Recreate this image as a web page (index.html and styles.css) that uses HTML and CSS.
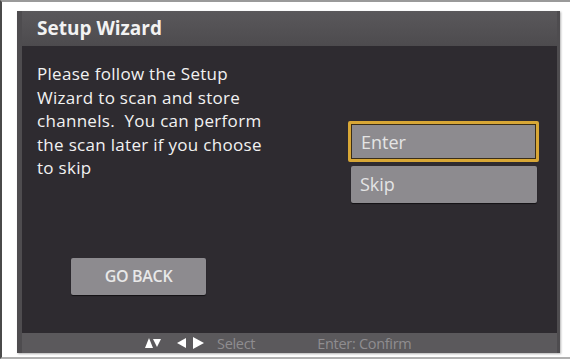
FILE: index.html
```html
<!DOCTYPE html>
<html lang="en">
<head>
    <meta charset="UTF-8">
    <meta name="viewport" content="width=device-width, initial-scale=1.0">
    <title>Setup Wizard</title>
    <link rel="stylesheet" href="styles.css">
</head>
<body>
    <div class="page">
        <div class="screen">
            <div class="title">Setup Wizard</div>
            <div class="panel">
                <p class="msg">Please follow the Setup<br>Wizard to scan and store<br>channels.&nbsp; You can perform<br>the scan later if you choose<br>to skip</p>
                <div class="options">
                    <div class="opt active">Enter</div>
                    <div class="opt">Skip</div>
                </div>
                <div class="back">GO BACK</div>
            </div>
            <div class="footer">
                <svg class="keys" width="64" height="12" viewBox="0 0 64 12">
                    <polygon points="0,11 4,1 8,11" fill="#fff"/>
                    <polygon points="8,2 16,2 12,10" fill="#fff"/>
                    <polygon points="32,6 41,1 41,11" fill="#fff"/>
                    <polygon points="48,0 59,6 48,12" fill="#fff"/>
                </svg>
                <span class="hint">Select</span>
                <span class="hint confirm">Enter: Confirm</span>
            </div>
        </div>
    </div>
</body>
</html>
```

FILE: styles.css
```css
body {
    margin: 0;
    background: #fff;
    font-family: "Open Sans", "Noto Sans", sans-serif;
}
.page {
    height: 359px;
    box-sizing: border-box;
    border-left: 2px solid #4a4a4a;
    border-top: 2px solid #9a9a9a;
    border-bottom: 2px solid #b0b0b0;
    padding: 9px 10px 4px 15px;
    display: flex;
}
.screen {
    flex: 1;
    display: flex;
    flex-direction: column;
    background: #4e4c4f;
    padding: 0 3px 0 5px;
    box-shadow: 1px 1px 2px rgba(0,0,0,0.3);
}
.title {
    height: 35px;
    line-height: 34px;
    padding-left: 15px;
    color: #f2f2f2;
    font-size: 19px;
    font-weight: bold;
    letter-spacing: 0;
    background: linear-gradient(#5a585b, #4d4b4e);
}
.panel {
    flex: 1;
    background: #2e2b30;
    padding: 16px 18px 0 15px;
    display: grid;
    grid-template-columns: 1fr 191px;
    grid-template-rows: auto 1fr;
}
.msg {
    margin: 0;
    color: #f2f2f2;
    font-size: 17px;
    line-height: 23.5px;
    letter-spacing: 0.3px;
}
.options {
    margin-top: 59px;
}
.opt {
    height: 37px;
    line-height: 36px;
    margin: 0 2px 4px 3px;
    padding-left: 9px;
    background: #8d8b8f;
    color: #e4e4e4;
    font-size: 18px;
    border-radius: 2px;
    box-shadow: 0 1px 1px rgba(0,0,0,0.6);
}
.opt.active {
    height: 35px;
    margin: 0 0 4px 0;
    padding-left: 10px;
    border: 3px solid #d8a736;
    box-shadow: inset 0 0 0 1px #3a2e18;
}
.back {
    grid-column: 1;
    align-self: start;
    margin: 51px 0 0 34px;
    width: 135px;
    height: 37px;
    line-height: 37px;
    text-align: center;
    background: #8d8b8f;
    color: #e8e8e8;
    font-size: 16px;
    font-weight: 600;
    letter-spacing: -0.3px;
    border-radius: 2px;
    box-shadow: 0 1px 1px rgba(0,0,0,0.6);
}
.footer {
    height: 20px;
    background: #5b595c;
    display: flex;
    align-items: center;
    padding-left: 123px;
    font-size: 14.5px;
    color: #8f8d90;
    letter-spacing: -0.3px;
}
.keys {
    margin-right: 8px;
}
.confirm {
    margin-left: 62px;
}
```
